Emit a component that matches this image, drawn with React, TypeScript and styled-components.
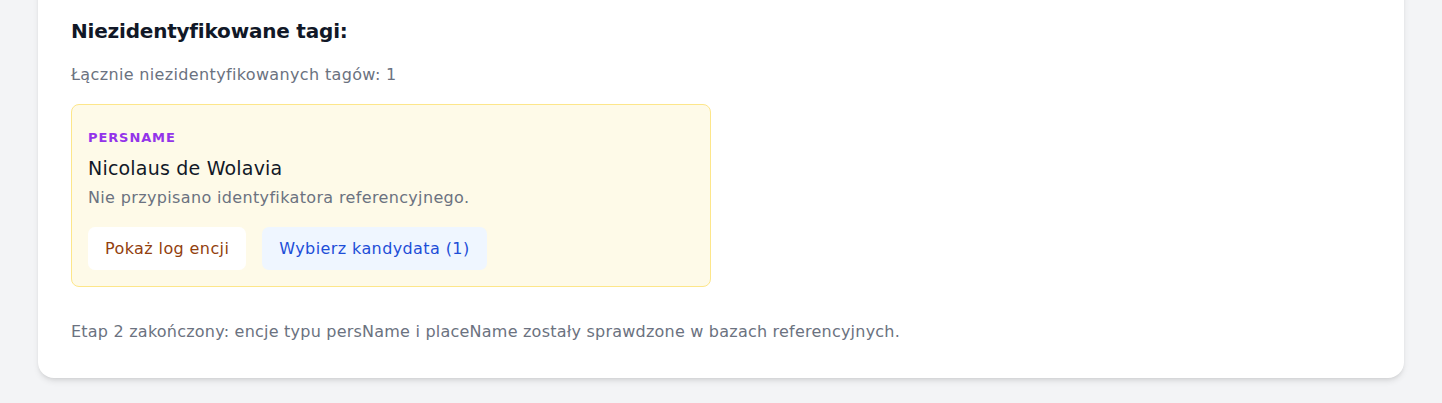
import React from 'react';
import styled, { createGlobalStyle } from 'styled-components';

const GlobalStyle = createGlobalStyle`
  html, body {
    margin: 0;
    padding: 0;
    background: #f3f4f6;
    font-family: 'DejaVu Sans', 'Noto Sans', sans-serif;
    -webkit-font-smoothing: antialiased;
  }
`;

const Page = styled.div`
  padding: 0 0 25px;
  overflow: hidden;
`;

const Card = styled.section`
  box-sizing: border-box;
  max-width: 1366px;
  margin: -20px auto 0;
  background: #ffffff;
  border-radius: 16px;
  box-shadow: 0 4px 6px -1px rgba(0, 0, 0, 0.1), 0 2px 4px -2px rgba(0, 0, 0, 0.1);
  padding: 37px 33px 34px;
`;

const Heading = styled.h2`
  margin: 0;
  font-size: 20px;
  line-height: 28px;
  font-weight: 700;
  letter-spacing: -0.2px;
  color: #111827;
`;

const Summary = styled.p`
  margin: 18px 0 17px;
  font-size: 16px;
  line-height: 24px;
  letter-spacing: 0.35px;
  color: #6b7280;
`;

const TagBox = styled.div`
  width: 640px;
  box-sizing: border-box;
  background: #fefae8;
  border: 1px solid #fde68a;
  border-radius: 8px;
  padding: 24px 16px 16px;
`;

const TagType = styled.div`
  font-size: 13px;
  line-height: 18px;
  font-weight: 700;
  text-transform: uppercase;
  letter-spacing: 0.9px;
  color: #9333ea;
`;

const TagName = styled.div`
  margin-top: 8px;
  font-size: 19px;
  line-height: 26px;
  font-weight: 500;
  letter-spacing: 0.2px;
  color: #111827;
`;

const TagNote = styled.div`
  margin-top: 5px;
  font-size: 16px;
  line-height: 24px;
  letter-spacing: 0.35px;
  color: #6b7280;
`;

const Actions = styled.div`
  display: flex;
  gap: 16px;
  margin-top: 17px;
`;

const ActionButton = styled.button<{ $variant: 'log' | 'pick' }>`
  border: none;
  border-radius: 7px;
  padding: 0 17px;
  height: 43px;
  font-family: inherit;
  font-size: 16px;
  letter-spacing: 0.4px;
  cursor: pointer;
  background: ${({ $variant }) => ($variant === 'log' ? '#ffffff' : '#eff6ff')};
  color: ${({ $variant }) => ($variant === 'log' ? '#92400e' : '#1d4ed8')};
`;

const Footer = styled.p`
  margin: 33px 0 0;
  font-size: 16px;
  line-height: 24px;
  letter-spacing: 0.22px;
  color: #6b7280;
`;

export default function App() {
  return (
    <Page>
      <GlobalStyle />
      <Card>
        <Heading>Niezidentyfikowane tagi:</Heading>
        <Summary>Łącznie niezidentyfikowanych tagów: 1</Summary>
        <TagBox>
          <TagType>persName</TagType>
          <TagName>Nicolaus de Wolavia</TagName>
          <TagNote>Nie przypisano identyfikatora referencyjnego.</TagNote>
          <Actions>
            <ActionButton $variant="log">Pokaż log encji</ActionButton>
            <ActionButton $variant="pick">Wybierz kandydata (1)</ActionButton>
          </Actions>
        </TagBox>
        <Footer>
          Etap 2 zakończony: encje typu persName i placeName zostały sprawdzone w bazach
          referencyjnych.
        </Footer>
      </Card>
    </Page>
  );
}
